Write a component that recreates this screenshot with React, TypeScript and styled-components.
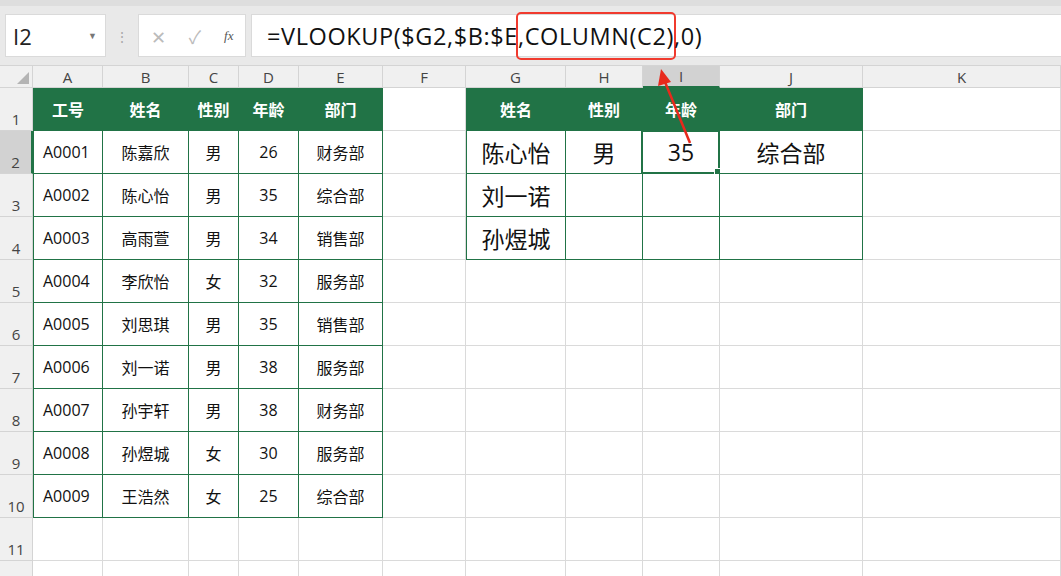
import React from "react";
import styled, { createGlobalStyle } from "styled-components";

const G = createGlobalStyle`
  body { margin:0; background:#fff; font-family: "Noto Sans CJK SC", "Noto Sans", sans-serif; overflow:hidden; }
`;
const COLS = [
  ["A", 70], ["B", 86], ["C", 50], ["D", 60], ["E", 84], ["F", 83], ["G", 100], ["H", 77], ["I", 77], ["J", 143], ["K", 198],
] as const;
const TEMPLATE = "33px " + COLS.map((c) => c[1] + "px").join(" ");
const GREEN = "#217346";

const Page = styled.div`width:1061px;height:576px;position:relative;overflow:hidden;`;
const Top = styled.div`height:66px;background:#e9e9e9;border-top:6px solid #dedede;box-sizing:border-box;display:flex;align-items:center;gap:0;padding:0 0 0 5px;border-bottom:1px solid #d4d4d4;`;
const NameBox = styled.div`width:101px;height:43px;background:#fff;border:1px solid #dadada;box-sizing:border-box;display:flex;align-items:center;justify-content:space-between;padding:0 8px 0 7px;font-size:22px;color:#222;font-family:"Open Sans",sans-serif;`;
const Caret = styled.span`font-size:9px;color:#777;`;
const Dots = styled.div`width:32px;text-align:center;color:#aaa;font-size:14px;`;
const Btns = styled.div`width:108px;height:43px;background:#fff;border:1px solid #dadada;box-sizing:border-box;display:flex;align-items:center;justify-content:space-around;color:#bbb;font-size:18px;`;
const Fx = styled.span`font-family:"Liberation Serif",serif;font-style:italic;color:#555;font-size:13px;`;
const Formula = styled.div`margin-left:5px;flex:1;height:43px;background:#fff;border:1px solid #dadada;border-right:none;box-sizing:border-box;display:flex;align-items:center;padding-left:15px;font-size:23.5px;letter-spacing:0.6px;color:#111;font-family:"Open Sans",sans-serif;white-space:pre;`;
const Boxed = styled.span`outline:2px solid #f03a2e;border-radius:3px;padding:6px 0;outline-offset:0;`;
const Row = styled.div<{ $h: number }>`display:grid;grid-template-columns:${TEMPLATE};height:${(p) => p.$h}px;`;
const Head = styled.div<{ $sel?: boolean }>`background:${(p) => (p.$sel ? "#d2d2d2" : "#f0f0f0")};border-right:1px solid #d4d4d4;border-bottom:${(p) => (p.$sel ? "2px solid " + GREEN : "1px solid #d4d4d4")};box-sizing:border-box;display:flex;align-items:center;justify-content:center;font-size:15px;color:#444;font-family:"Open Sans",sans-serif;`;
const RowHead = styled(Head)`align-items:flex-end;padding-bottom:1px;border-right:${(p) => (p.$sel ? "2px solid " + GREEN : "1px solid #d4d4d4")};border-bottom:1px solid #d4d4d4;`;
const Corner = styled(Head)`position:relative;`;
const Tri = styled.div`position:absolute;right:3px;bottom:3px;width:0;height:0;border-left:12px solid transparent;border-bottom:12px solid #b4b4b4;`;
const Cell = styled.div<{ $t?: boolean; $hd?: boolean; $big?: boolean; $l?: boolean; $left?: boolean }>`
  box-sizing:border-box;display:flex;align-items:center;justify-content:${(p) => (p.$left ? "flex-start" : "center")};
  padding-left:${(p) => (p.$left ? "9px" : "0")};
  border-right:1px solid ${(p) => (p.$t ? GREEN : "#dadada")};
  border-bottom:1px solid ${(p) => (p.$t ? GREEN : "#dadada")};
  border-left:${(p) => (p.$l ? "1px solid " + GREEN : "none")};
  background:${(p) => (p.$hd ? GREEN : "#fff")};
  color:${(p) => (p.$hd ? "#fff" : "#111")};
  font-weight:${(p) => (p.$hd ? 700 : 400)};
  font-size:${(p) => (p.$big ? "23px" : "16px")};
  font-family:"Open Sans","Noto Sans CJK SC",sans-serif;
  position:relative;
`;
const Sel = styled.div`position:absolute;inset:-1px -1px -1px -2px;border:2px solid ${GREEN};pointer-events:none;`;
const Handle = styled.div`position:absolute;right:-4px;bottom:-4px;width:6px;height:6px;background:${GREEN};border:1px solid #fff;`;
const Arrow = styled.svg`position:absolute;left:0;top:0;pointer-events:none;`;

const left = [
  ["A0001", "陈嘉欣", "男", "26", "财务部"],
  ["A0002", "陈心怡", "男", "35", "综合部"],
  ["A0003", "高雨萱", "男", "34", "销售部"],
  ["A0004", "李欣怡", "女", "32", "服务部"],
  ["A0005", "刘思琪", "男", "35", "销售部"],
  ["A0006", "刘一诺", "男", "38", "服务部"],
  ["A0007", "孙宇轩", "男", "38", "财务部"],
  ["A0008", "孙煜城", "女", "30", "服务部"],
  ["A0009", "王浩然", "女", "25", "综合部"],
];
const right = [
  ["陈心怡", "男", "35", "综合部"],
  ["刘一诺", "", "", ""],
  ["孙煜城", "", "", ""],
];

export default function App() {
  const rows = [];
  for (let r = 1; r <= 12; r++) {
    const cells = [];
    for (let c = 0; c < 11; c++) {
      let txt = "";
      let t = false, hd = false, big = false, l = false, lft = false, sel = false;
      if (c <= 4 && r <= 10) {
        t = true; l = c === 0;
        if (r === 1) { hd = true; txt = ["工号", "姓名", "性别", "年龄", "部门"][c]; }
        else { txt = left[r - 2][c]; lft = c === 0; }
      }
      if (c >= 6 && c <= 9 && r <= 4) {
        t = true; l = c === 6;
        if (r === 1) { hd = true; txt = ["姓名", "性别", "年龄", "部门"][c - 6]; }
        else { txt = right[r - 2][c - 6]; big = true; }
        if (r === 2 && c === 8) sel = true;
      }
      cells.push(
        <Cell key={c} $t={t} $hd={hd} $big={big} $l={l} $left={lft}>
          {txt}
          {sel && <Sel><Handle /></Sel>}
        </Cell>
      );
    }
    rows.push(
      <Row key={r} $h={43}>
        <RowHead $sel={r === 2}>{r <= 11 ? r : ""}</RowHead>
        {cells}
      </Row>
    );
  }
  return (
    <Page>
      <G />
      <Top>
        <NameBox>I2<Caret>▼</Caret></NameBox>
        <Dots>⋮</Dots>
        <Btns><span>✕</span><span>✓</span><Fx>fx</Fx></Btns>
        <Formula>=VLOOKUP($G2,$B:$E<Boxed>,COLUMN(C2)</Boxed>,0)</Formula>
      </Top>
      <Row $h={22}>
        <Corner><Tri /></Corner>
        {COLS.map(([n]) => <Head key={n} $sel={n === "I"}>{n}</Head>)}
      </Row>
      {rows}
      <Arrow width="1061" height="576">
        <line x1="690" y1="143" x2="665" y2="82" stroke="#e8291c" strokeWidth="2.5" />
        <polygon points="661,69 658,86 671,82" fill="#e8291c" />
      </Arrow>
    </Page>
  );
}
